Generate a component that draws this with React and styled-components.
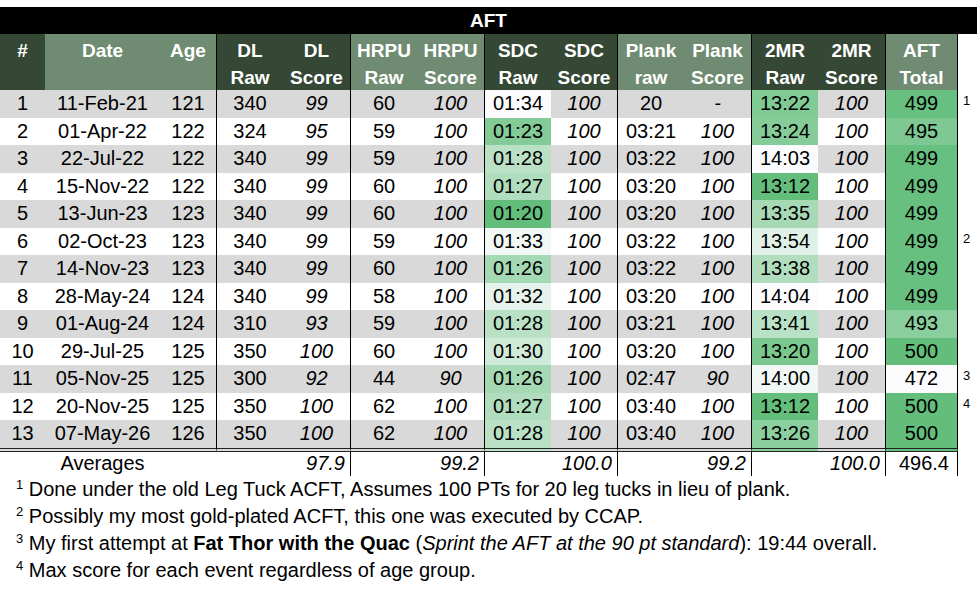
import React from "react";
import styled, { createGlobalStyle, css } from "styled-components";

const GlobalStyle = createGlobalStyle`
  html, body { margin: 0; padding: 0; background: #fff; }
  body { font-family: "Liberation Sans", Arial, sans-serif; }
`;

const COLS = "45px 115px 56px 67px 67px 67px 67px 67px 66px 67px 67px 67px 67px 73px 19px";
const DARK = "#354836";
const LIGHT = "#6f8b71";
const BAND = "#d9d9d9";

const Page = styled.div`
  width: 977px;
  padding-top: 7px;
  color: #000;
  font-family: "Liberation Sans", Arial, sans-serif;
`;

const Title = styled.div`
  height: 27px;
  background: #000;
  color: #fff;
  font-weight: 700;
  font-size: 19px;
  display: flex;
  align-items: center;
  justify-content: center;
  padding-top: 1px;
  box-sizing: border-box;
`;

const Row = styled.div`
  display: grid;
  grid-template-columns: ${COLS};
  height: ${(p) => p.$h}px;
`;

const sepLine = css`
  ${(p) => p.$sep && "border-left: 1px solid #000;"}
  ${(p) => p.$end && "border-right: 1px solid #000;"}
`;

const HeaderCell = styled.div`
  box-sizing: border-box;
  background: ${(p) => (p.$tone === "dark" ? DARK : p.$tone === "light" ? LIGHT : "#fff")};
  color: #fff;
  font-weight: 700;
  font-size: 19px;
  line-height: 27px;
  padding-top: 3px;
  text-align: center;
  white-space: pre-line;
  ${(p) => p.$tone && "border-bottom: 1px solid #2b3a2c;"}
  ${sepLine}
`;

const Cell = styled.div`
  box-sizing: border-box;
  display: flex;
  align-items: center;
  justify-content: ${(p) => (p.$align === "right" ? "flex-end" : "center")};
  padding-right: ${(p) => (p.$align === "right" ? `${p.$pad ?? 5}px` : "0")};
  background: ${(p) => p.$bg || "#fff"};
  font-size: 20px;
  font-style: ${(p) => (p.$italic ? "italic" : "normal")};
  white-space: nowrap;
  ${sepLine}
  ${(p) => p.$last && "border-bottom: 4px double #222;"}
`;

const Marker = styled.div`
  font-size: 13px;
  padding: 4px 0 0 5px;
  line-height: 14px;
  background: #fff;
`;

const Notes = styled.div`
  padding-left: 16px;
  font-size: 20px;
  line-height: 27.3px;
`;

const Note = styled.div`
  white-space: nowrap;
`;

const Sup = styled.sup`
  font-size: 13px;
  line-height: 0;
  vertical-align: 7px;
`;

const WHITE = [252, 252, 255];
const GREEN = [99, 190, 123];
const scale = (t) => {
  const c = WHITE.map((w, i) => Math.round(w + (GREEN[i] - w) * Math.max(0, Math.min(1, t))));
  return `rgb(${c[0]},${c[1]},${c[2]})`;
};
const secs = (s) => {
  const [m, x] = s.split(":").map(Number);
  return m * 60 + x;
};

const rows = [
  [1, "11-Feb-21", 121, 340, 99, 60, 100, "01:34", 100, "20", "-", "13:22", 100, 499, "1"],
  [2, "01-Apr-22", 122, 324, 95, 59, 100, "01:23", 100, "03:21", 100, "13:24", 100, 495],
  [3, "22-Jul-22", 122, 340, 99, 59, 100, "01:28", 100, "03:22", 100, "14:03", 100, 499],
  [4, "15-Nov-22", 122, 340, 99, 60, 100, "01:27", 100, "03:20", 100, "13:12", 100, 499],
  [5, "13-Jun-23", 123, 340, 99, 60, 100, "01:20", 100, "03:20", 100, "13:35", 100, 499],
  [6, "02-Oct-23", 123, 340, 99, 59, 100, "01:33", 100, "03:22", 100, "13:54", 100, 499, "2"],
  [7, "14-Nov-23", 123, 340, 99, 60, 100, "01:26", 100, "03:22", 100, "13:38", 100, 499],
  [8, "28-May-24", 124, 340, 99, 58, 100, "01:32", 100, "03:20", 100, "14:04", 100, 499],
  [9, "01-Aug-24", 124, 310, 93, 59, 100, "01:28", 100, "03:21", 100, "13:41", 100, 493],
  [10, "29-Jul-25", 125, 350, 100, 60, 100, "01:30", 100, "03:20", 100, "13:20", 100, 500],
  [11, "05-Nov-25", 125, 300, 92, 44, 90, "01:26", 100, "02:47", 90, "14:00", 100, 472, "3"],
  [12, "20-Nov-25", 125, 350, 100, 62, 100, "01:27", 100, "03:40", 100, "13:12", 100, 500, "4"],
  [13, "07-May-26", 126, 350, 100, 62, 100, "01:28", 100, "03:40", 100, "13:26", 100, 500],
];

const headers = [
  ["#", "dark"],
  ["Date", "light"],
  ["Age", "light"],
  ["DL\nRaw", "dark", true],
  ["DL\nScore", "dark"],
  ["HRPU\nRaw", "light", true],
  ["HRPU\nScore", "light"],
  ["SDC\nRaw", "dark", true],
  ["SDC\nScore", "dark"],
  ["Plank\nraw", "light", true],
  ["Plank\nScore", "light"],
  ["2MR\nRaw", "dark", true],
  ["2MR\nScore", "dark"],
  ["AFT\nTotal", "light", true, true],
];

const SEP = new Set([3, 5, 7, 9, 11, 13]);
const ITALIC = new Set([4, 6, 8, 10, 12]);

function colorFor(i, v) {
  if (i === 7) return scale((94 - secs(v)) / 14);
  if (i === 11) return scale((844 - secs(v)) / 52);
  if (i === 13) return scale((v - 472) / 28);
  return null;
}

export default function App() {
  return (
    <Page>
      <GlobalStyle />
      <Title>AFT</Title>
      <Row $h={56}>
        {headers.map(([t, tone, sep, end], i) => (
          <HeaderCell key={i} $tone={tone} $sep={sep} $end={end}>
            {t}
          </HeaderCell>
        ))}
        <HeaderCell />
      </Row>
      {rows.map((r, ri) => {
        const band = ri % 2 === 0 ? BAND : "#fff";
        const last = ri === rows.length - 1;
        return (
          <Row key={ri} $h={last ? 31.5 : 27.5}>
            {r.slice(0, 14).map((v, i) => (
              <Cell
                key={i}
                $bg={colorFor(i, v) || band}
                $sep={SEP.has(i)}
                $end={i === 13}
                $italic={ITALIC.has(i)}
                $last={last}
              >
                {v}
              </Cell>
            ))}
            <Marker>{r[14] || ""}</Marker>
          </Row>
        );
      })}
      <Row $h={24}>
        <Cell />
        <Cell>Averages</Cell>
        <Cell />
        <Cell />
        <Cell $italic $align="right">97.9</Cell>
        <Cell $sep />
        <Cell $italic $align="right">99.2</Cell>
        <Cell $sep />
        <Cell $italic $align="right">100.0</Cell>
        <Cell $sep />
        <Cell $italic $align="right">99.2</Cell>
        <Cell $sep />
        <Cell $italic $align="right">100.0</Cell>
        <Cell $sep $end $align="right" $pad={8}>496.4</Cell>
        <Marker />
      </Row>
      <Notes>
        <Note>
          <Sup>1</Sup> Done under the old Leg Tuck ACFT, Assumes 100 PTs for 20 leg tucks in lieu of plank.
        </Note>
        <Note>
          <Sup>2</Sup> Possibly my most gold-plated ACFT, this one was executed by CCAP.
        </Note>
        <Note>
          <Sup>3</Sup> My first attempt at <b>Fat Thor with the Quac</b> (<i>Sprint the AFT at the 90 pt standard</i>): 19:44 overall.
        </Note>
        <Note>
          <Sup>4</Sup> Max score for each event regardless of age group.
        </Note>
      </Notes>
    </Page>
  );
}
